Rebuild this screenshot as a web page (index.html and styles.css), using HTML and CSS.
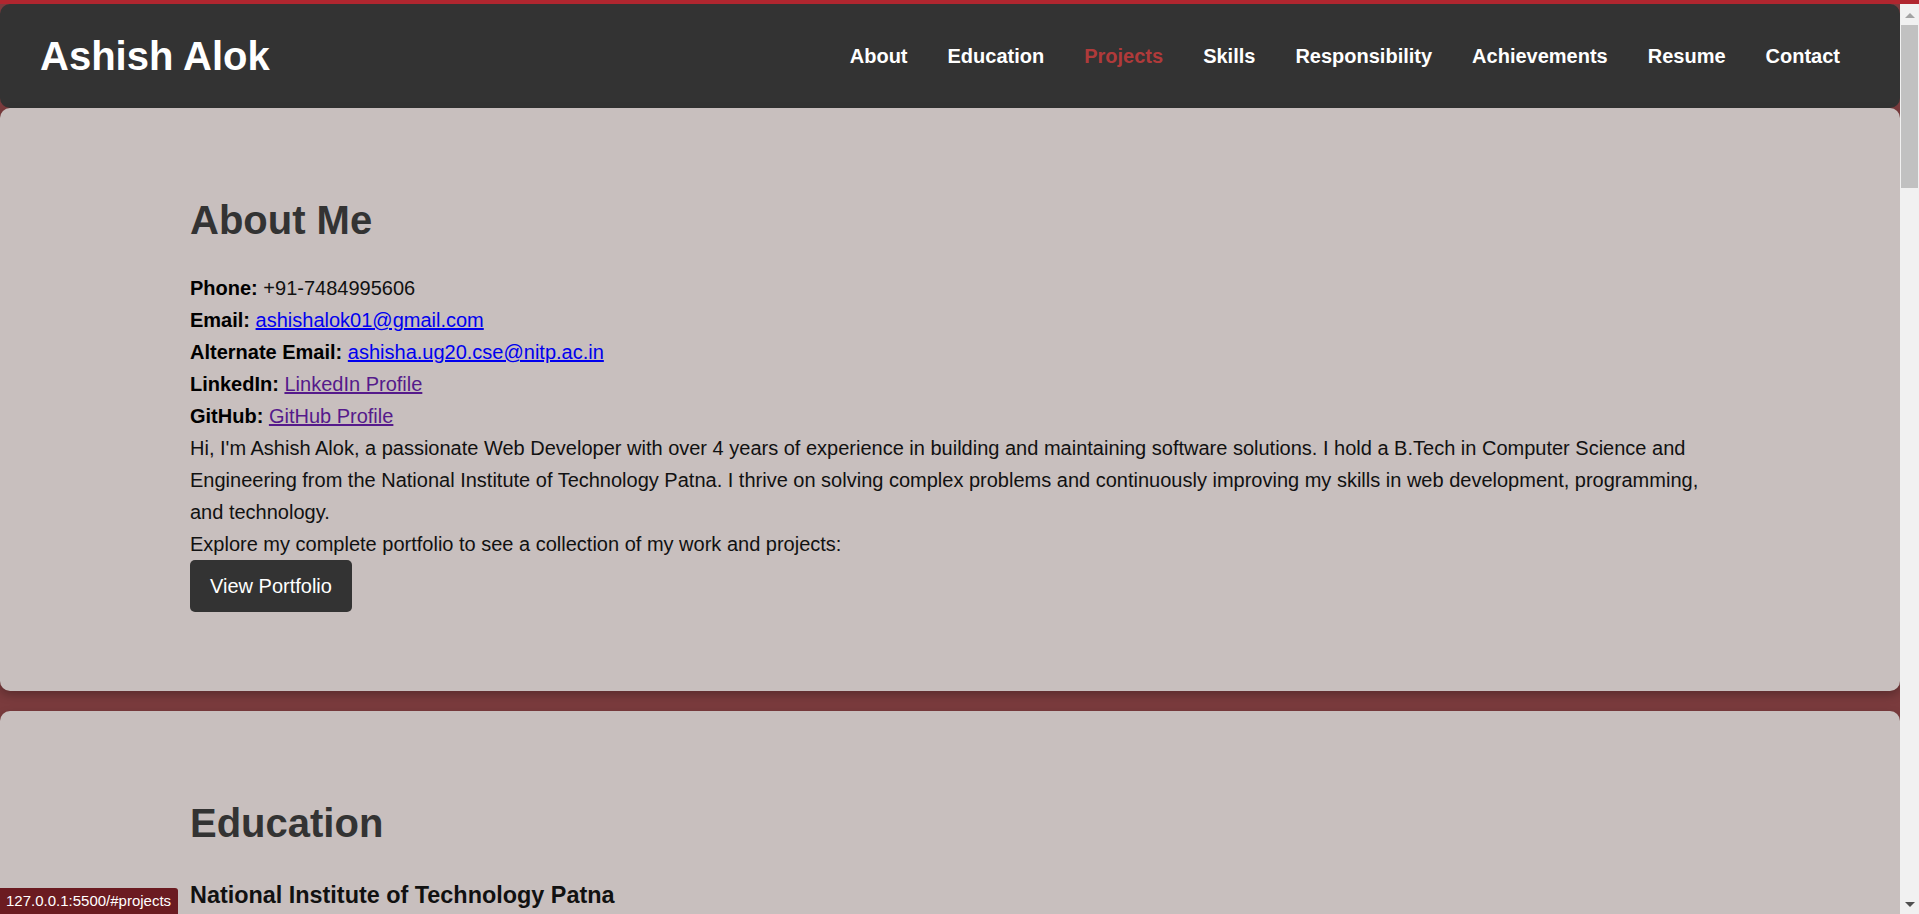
FILE: index.html
```html
<!DOCTYPE html>
<html lang="en">
<head>
<meta charset="utf-8">
<title>Ashish Alok</title>
<link rel="stylesheet" href="styles.css">
</head>
<body>
<div class="topline"></div>
<div class="frame">
  <div class="page">
    <header class="site-header">
      <h1 class="logo">Ashish Alok</h1>
      <nav class="nav">
        <a href="#about" class="nav-link">About</a>
        <a href="#education" class="nav-link">Education</a>
        <a href="#projects" class="nav-link active">Projects</a>
        <a href="#skills" class="nav-link">Skills</a>
        <a href="#responsibility" class="nav-link">Responsibility</a>
        <a href="#achievements" class="nav-link">Achievements</a>
        <a href="#resume" class="nav-link">Resume</a>
        <a href="#contact" class="nav-link">Contact</a>
      </nav>
    </header>

    <section class="card card-about" id="about">
      <h2 class="section-title">About Me</h2>
      <div class="about-text">
        <div><strong>Phone:</strong> +91-7484995606</div>
        <div><strong>Email:</strong> <a class="link" href="#">ashishalok01@gmail.com</a></div>
        <div><strong>Alternate Email:</strong> <a class="link" href="#">ashisha.ug20.cse@nitp.ac.in</a></div>
        <div><strong>LinkedIn:</strong> <a class="link visited" href="#">LinkedIn Profile</a></div>
        <div><strong>GitHub:</strong> <a class="link visited" href="#">GitHub Profile</a></div>
        <p class="bio">Hi, I'm Ashish Alok, a passionate Web Developer with over 4 years of experience in building and maintaining software solutions. I hold a B.Tech in Computer Science and Engineering from the National Institute of Technology Patna. I thrive on solving complex problems and continuously improving my skills in web development, programming, and technology.</p>
        <p class="bio">Explore my complete portfolio to see a collection of my work and projects:</p>
        <a class="btn" href="#">View Portfolio</a>
      </div>
    </section>

    <section class="card" id="education">
      <h2 class="section-title">Education</h2>
      <h3 class="school">National Institute of Technology Patna</h3>
    </section>
  </div>
  <div class="scrollbar">
    <div class="sb-up"></div>
    <div class="sb-thumb"></div>
    <div class="sb-track"></div>
    <div class="sb-down"></div>
  </div>
</div>
<div class="status">127.0.0.1:5500/#projects</div>
</body>
</html>
```

FILE: styles.css
```css
html, body {
  margin: 0;
  padding: 0;
  height: 914px;
  overflow: hidden;
}

body {
  background: #7a3b3d;
  font-family: "Liberation Sans", Arial, sans-serif;
  color: #111;
}

.topline {
  height: 4px;
  background: #b0262f;
}

.frame {
  display: flex;
  height: 910px;
}

.page {
  width: 1900px;
  flex: 0 0 1900px;
  height: 910px;
  overflow: hidden;
}

.site-header {
  height: 104px;
  box-sizing: border-box;
  padding: 0 40px 0 40px;
  background: #333333;
  border-radius: 10px;
  display: flex;
  align-items: center;
  justify-content: space-between;
}

.logo {
  margin: 0;
  font-size: 40px;
  font-weight: bold;
  color: #ffffff;
  line-height: 46px;
}

.nav {
  display: flex;
  align-items: center;
}

.nav-link {
  color: #ffffff;
  text-decoration: none;
  font-size: 20px;
  font-weight: bold;
  margin: 0 20px;
  line-height: 24px;
}

.nav-link.active {
  color: #b03a3a;
}

.card {
  background: #c8bfbe;
  border-radius: 10px;
  padding: 80px 10%;
  box-shadow: 0 4px 10px rgba(0, 0, 0, 0.25);
}

.card-about {
  padding-bottom: 79px;
}

.card + .card {
  margin-top: 20px;
}

.section-title {
  margin: 0 0 20px;
  font-size: 40px;
  line-height: 64px;
  font-weight: bold;
  color: #333333;
}

.about-text {
  font-size: 20px;
  line-height: 32px;
}

.about-text strong {
  font-weight: bold;
  color: #000;
}

.bio {
  margin: 0;
}

.link {
  color: #0000ee;
  text-decoration: underline;
}

.link.visited {
  color: #551a8b;
}

.btn {
  display: inline-block;
  vertical-align: top;
  background: #333333;
  color: #ffffff;
  text-decoration: none;
  font-size: 20px;
  line-height: 32px;
  padding: 10px 20px;
  border-radius: 5px;
}

.school {
  margin: 23px 0 0;
  font-size: 23.4px;
  line-height: 35px;
  font-weight: bold;
  color: #111;
}

.scrollbar {
  flex: 0 0 19px;
  width: 19px;
  height: 910px;
  background: #f1f1f1;
  display: flex;
  flex-direction: column;
  align-items: center;
}

.sb-up {
  margin-top: 9px;
  width: 0;
  height: 0;
  border-left: 5px solid transparent;
  border-right: 5px solid transparent;
  border-bottom: 5px solid #a3a3a3;
}

.sb-thumb {
  margin-top: 7px;
  width: 17px;
  height: 163px;
  background: #c1c1c1;
}

.sb-track {
  flex: 1;
}

.sb-down {
  margin-bottom: 7px;
  width: 0;
  height: 0;
  border-left: 5px solid transparent;
  border-right: 5px solid transparent;
  border-top: 5px solid #505050;
}

.status {
  position: fixed;
  left: 0;
  bottom: 0;
  height: 26px;
  box-sizing: border-box;
  padding: 0 7px 0 6px;
  background: #6b1b21;
  color: #ffffff;
  font-family: "Liberation Sans", Arial, sans-serif;
  font-size: 15px;
  line-height: 26px;
  border-top-right-radius: 3px;
}
```
